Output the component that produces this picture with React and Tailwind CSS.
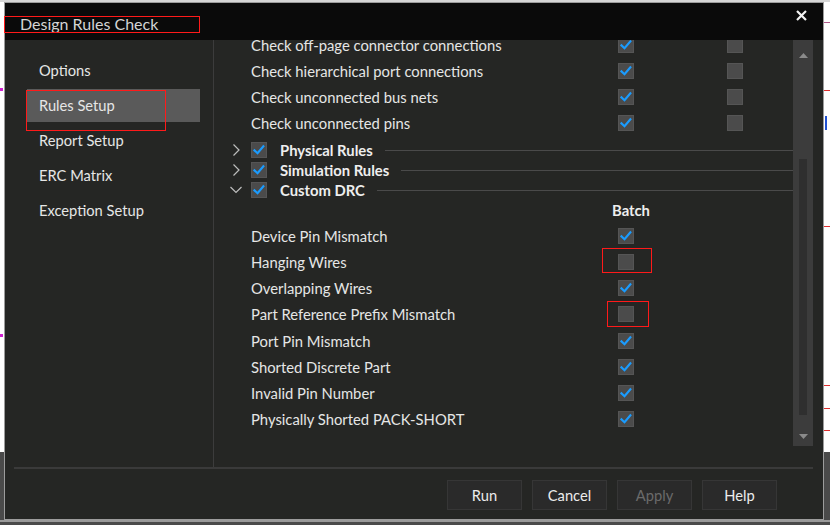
import React from "react";

const font = { fontFamily: "Lato, 'Noto Sans', sans-serif" };

function Check({ on }) {
  return (
    <span className="flex h-[16px] w-[16px] items-center justify-center bg-[#4b4b4b] border border-[#555555]">
      {on && (
        <svg width="14" height="14" viewBox="0 0 16 16" fill="none">
          <path d="M2.8 8.4 L6.3 11.6 L13 3.8" stroke="#1a9cff" strokeWidth="2.4" strokeLinecap="square" />
        </svg>
      )}
    </span>
  );
}

function Chevron({ open }) {
  return (
    <svg width="12" height="12" viewBox="0 0 12 12" fill="none" className="shrink-0">
      {open ? (
        <path d="M0.5 3 L6 8.5 L11.5 3" stroke="#bdbdbd" strokeWidth="1.2" />
      ) : (
        <path d="M3.5 0.5 L9 6 L3.5 11.5" stroke="#bdbdbd" strokeWidth="1.2" />
      )}
    </svg>
  );
}

const topRows = [
  "Check off-page connector connections",
  "Check hierarchical port connections",
  "Check unconnected bus nets",
  "Check unconnected pins",
];

const tree = [
  { label: "Physical Rules", open: false },
  { label: "Simulation Rules", open: false },
  { label: "Custom DRC", open: true },
];

const drc = [
  { label: "Device Pin Mismatch", on: true },
  { label: "Hanging Wires", on: false, mark: "a" },
  { label: "Overlapping Wires", on: true },
  { label: "Part Reference Prefix Mismatch", on: false, mark: "b" },
  { label: "Port Pin Mismatch", on: true },
  { label: "Shorted Discrete Part", on: true },
  { label: "Invalid Pin Number", on: true },
  { label: "Physically Shorted PACK-SHORT", on: true },
];

const nav = ["Options", "Rules Setup", "Report Setup", "ERC Matrix", "Exception Setup"];

export default function App() {
  return (
    <div className="relative w-[830px] h-[525px] overflow-hidden bg-white" style={font}>
      {/* backdrop bits */}
      <div className="absolute left-0 top-0 w-full h-[2px] bg-[#d6d6d6]" />
      <div className="absolute left-0 top-[452px] w-full h-[73px] bg-[#4a4a4a]" />
      <div className="absolute left-0 top-[520px] w-full h-[2px] bg-[#9a9a9a]" />
      <div className="absolute right-0 top-[22px] w-[6px] h-[1px] bg-[#b05a8a]" />
      <div className="absolute right-0 top-[90px] w-[6px] h-[1px] bg-[#e03030]" />
      <div className="absolute right-[3px] top-[116px] w-[2px] h-[14px] bg-[#2050d0]" />
      <div className="absolute right-0 top-[226px] w-[6px] h-[1px] bg-[#e03030]" />
      <div className="absolute right-0 top-[385px] w-[6px] h-[1px] bg-[#e03030]" />
      <div className="absolute right-0 top-[408px] w-[6px] h-[1px] bg-[#e03030]" />
      <div className="absolute right-0 top-[430px] w-[6px] h-[1px] bg-[#e03030]" />
      <div className="absolute left-0 top-[88px] w-[3px] h-[3px] bg-[#d020d0]" />
      <div className="absolute left-0 top-[334px] w-[3px] h-[3px] bg-[#d020d0]" />

      {/* dialog */}
      <div className="absolute left-[4px] top-[2px] w-[820px] h-[518px] flex flex-col bg-[#252624] border border-[#9c9c9c]">
        <div className="relative h-[37px] shrink-0 bg-[#0a0a0a] flex items-center pl-[15px] pt-[5px]">
          <span className="text-[16px] text-[#d4d4d4]">Design Rules Check</span>
          <span className="absolute left-[-1px] top-[13px] w-[196px] h-[17px] border border-[#ff1a1a]" />
          <svg className="absolute right-[16px] top-[7px]" width="11" height="11" viewBox="0 0 11 11">
            <path d="M1 1 L10 10 M10 1 L1 10" stroke="#f2f2f2" strokeWidth="2.2" />
          </svg>
        </div>

        <div className="flex flex-1 min-h-0 pl-[9px] pr-[10px]">
          <div className="flex flex-col flex-1 min-w-0">
            <div className="flex h-[427px]">
              {/* sidebar */}
              <div className="w-[200px] shrink-0 border-r border-[#3c3c3c] pt-[14px] pl-[13px] pr-[13px] flex flex-col gap-[2px]">
                {nav.map((n) => (
                  <div
                    key={n}
                    className={`relative h-[33px] flex items-center pl-[12px] text-[14.7px] text-[#e6e6e6] ${n === "Rules Setup" ? "bg-[#5a5a5a]" : ""}`}
                  >
                    {n}
                    {n === "Rules Setup" && (
                      <span className="absolute left-[-1px] top-[1px] w-[140px] h-[41px] border border-[#ff1a1a]" />
                    )}
                  </div>
                ))}
              </div>

              {/* content */}
              <div className="flex flex-1 min-w-0">
                <div className="flex-1 min-w-0 h-[406px] overflow-hidden">
                  <div className="mt-[-8px] flex flex-col text-[14.8px] text-[#e6e6e6]">
                    {topRows.map((r) => (
                      <div key={r} className="h-[26px] flex items-center">
                        <span className="w-[404px] shrink-0 pl-[37px] whitespace-nowrap">{r}</span>
                        <Check on />
                        <span className="ml-[93px]">
                          <Check />
                        </span>
                      </div>
                    ))}

                    <div className="mt-[4px] flex flex-col">
                      {tree.map((t) => (
                        <div key={t.label} className="h-[20px] flex items-center">
                          <span className="w-[37px] shrink-0 pl-[16px] flex items-center">
                            <Chevron open={t.open} />
                          </span>
                          <Check on />
                          <span className="ml-[13px] font-bold text-[#eeeeee] whitespace-nowrap">{t.label}</span>
                          <span className="ml-[12px] flex-1 h-px bg-[#4a4a4a]" />
                        </div>
                      ))}
                    </div>

                    <div className="h-[20px] flex items-center pl-[398px] font-bold text-[#eeeeee]">Batch</div>

                    <div className="mt-[3px] flex flex-col">
                      {drc.map((d) => (
                        <div key={d.label} className="h-[26.15px] flex items-center">
                          <span className="w-[404px] shrink-0 pl-[37px] whitespace-nowrap">{d.label}</span>
                          <span className="relative">
                            <Check on={d.on} />
                            {d.mark === "a" && (
                              <span className="absolute left-[-16px] top-[-6px] w-[50px] h-[25px] border border-[#ff1a1a]" />
                            )}
                            {d.mark === "b" && (
                              <span className="absolute left-[-11px] top-[-5px] w-[42px] h-[26px] border border-[#ff1a1a]" />
                            )}
                          </span>
                        </div>
                      ))}
                    </div>
                  </div>
                </div>

                {/* scrollbar */}
                <div className="w-[20px] h-[406px] shrink-0 bg-[#3c3c3c] flex flex-col items-center">
                  <svg className="mt-[13px]" width="9" height="5" viewBox="0 0 9 5">
                    <path d="M0 5 L4.5 0 L9 5 Z" fill="#8a8a8a" />
                  </svg>
                  <div className="mt-[101px] w-[8px] h-[256px] bg-[#2f2f2f]" />
                  <svg className="mt-[19px]" width="9" height="5" viewBox="0 0 9 5">
                    <path d="M0 0 L4.5 5 L9 0 Z" fill="#8a8a8a" />
                  </svg>
                </div>
              </div>
            </div>

            <div className="h-[2px] bg-[#3a3a3a]" />

            <div className="flex justify-end gap-[10px] pt-[11px] pr-[36px] text-[14.7px]">
              {["Run", "Cancel", "Apply", "Help"].map((b) => (
                <div
                  key={b}
                  className={`w-[75px] h-[30px] flex items-center justify-center bg-[#2a2a2a] border border-[#363636] ${b === "Apply" ? "text-[#6a6a6a]" : "text-[#ececec]"}`}
                >
                  {b}
                </div>
              ))}
            </div>
          </div>
        </div>
      </div>
    </div>
  );
}
